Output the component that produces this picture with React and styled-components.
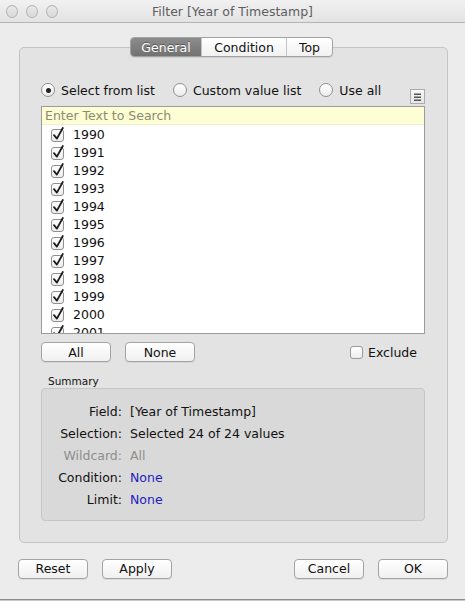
import React from 'react';
import styled, {createGlobalStyle} from 'styled-components';

const GlobalStyle = createGlobalStyle`
    html, body {
        margin: 0;
        padding: 0;
        background: #c9c9c9;
    }
    body {
        font-family: "DejaVu Sans", "Liberation Sans", sans-serif;
        font-size: 12.5px;
        color: #111;
    }
`;

const WindowDIV = styled.div`
    width: 465px;
    height: 599px;
    background: #ececec;
    border-bottom: 1px solid #8c8c8c;
    display: flex;
    flex-direction: column;
    overflow: hidden;
`;

const TitleBar = styled.div`
    height: 22px;
    flex: none;
    display: flex;
    align-items: center;
    padding-left: 6px;
    background: linear-gradient(#f1f1f1, #e3e3e3);
    border-bottom: 1px solid #b4b4b4;
`;

const Lights = styled.div`
    display: flex;
    gap: 8px;
    width: 52px;
`;

const Light = styled.span`
    width: 11px;
    height: 11px;
    border-radius: 50%;
    border: 1px solid #b3b3b3;
    background: linear-gradient(#e9e9e9, #d9d9d9);
`;

const Title = styled.div`
    flex: 1;
    text-align: center;
    color: #5e5e5e;
    margin-right: 58px;
    margin-top: 1px;
`;

const Content = styled.div`
    flex: 1;
    display: flex;
    flex-direction: column;
    padding: 14px 17px 0 19px;
`;

const TabStrip = styled.div`
    display: flex;
    justify-content: center;
    position: relative;
    z-index: 1;
    margin-bottom: -10px;
    padding-right: 4px;
`;

const TabGroup = styled.div`
    display: flex;
    border: 1px solid #a2a2a2;
    border-radius: 4px;
    overflow: hidden;
    background: linear-gradient(#ffffff, #f1f1f1);
    box-shadow: 0 1px 0 rgba(0,0,0,0.08);
`;

const Tab = styled.div`
    height: 18px;
    width: ${p => p.$w}px;
    display: flex;
    align-items: center;
    justify-content: center;
    border-left: ${p => p.$first ? 'none' : '1px solid #c4c4c4'};
    color: ${p => p.$active ? '#fff' : '#111'};
    background: ${p => p.$active ? 'linear-gradient(#8c8c8c, #727272)' : 'transparent'};
    text-shadow: ${p => p.$active ? '0 -1px 0 rgba(0,0,0,0.35)' : 'none'};
`;

const TabBox = styled.div`
    border: 1px solid #c3c3c3;
    border-radius: 5px;
    background: #e3e3e3;
    padding: 35px 22px 21px 21px;
    display: flex;
    flex-direction: column;
`;

const HeaderRow = styled.div`
    display: flex;
    justify-content: space-between;
    align-items: flex-start;
    height: 21px;
`;

const RadioGroup = styled.div`
    display: flex;
    gap: 18px;
`;

const RadioLabel = styled.label`
    display: flex;
    align-items: center;
    gap: 6px;
    height: 14px;
`;

const RadioCircle = styled.span`
    width: 12px;
    height: 12px;
    border-radius: 50%;
    border: 1px solid #8f8f8f;
    background: linear-gradient(#ffffff, #ececec);
    display: flex;
    align-items: center;
    justify-content: center;
    &::after {
        content: '';
        width: 5px;
        height: 5px;
        border-radius: 50%;
        background: #222;
        display: ${p => p.$on ? 'block' : 'none'};
    }
`;

const MenuButton = styled.div`
    margin-top: 6px;
    width: 13px;
    height: 13px;
    border: 1px solid #acacac;
    background: linear-gradient(#f7f7f7, #e6e6e6);
    display: flex;
    align-items: center;
    justify-content: center;
`;

const ListBox = styled.div`
    margin-top: 2px;
    height: 226px;
    border: 1px solid #9b9b9b;
    background: #fff;
    overflow: hidden;
`;

const SearchRow = styled.div`
    height: 17px;
    background: #fdfdd6;
    color: #8b8b6e;
    padding-left: 3px;
    display: flex;
    align-items: center;
    border-bottom: 1px solid #f0f0c8;
`;

const ItemRow = styled.div`
    height: 18px;
    display: flex;
    align-items: center;
    padding-left: 9px;
    gap: 7px;
`;

const ListActions = styled.div`
    margin-top: 8px;
    display: flex;
    align-items: center;
    gap: 14px;
    padding-right: 8px;
`;

const Button = styled.div`
    width: 68px;
    height: 18px;
    border: 1px solid #a3a3a3;
    border-radius: 4px;
    background: linear-gradient(#ffffff, #f0f0f0);
    box-shadow: 0 1px 0 rgba(0,0,0,0.07);
    display: flex;
    align-items: center;
    justify-content: center;
`;

const ExcludeLabel = styled.label`
    margin-left: auto;
    display: flex;
    align-items: center;
    gap: 5px;
`;

const SmallBox = styled.span`
    width: 11px;
    height: 11px;
    border: 1px solid #9a9a9a;
    border-radius: 3px;
    background: linear-gradient(#ffffff, #ededed);
`;

const SummaryTitle = styled.div`
    margin-top: 12px;
    padding-left: 7px;
    font-size: 10.5px;
    height: 14px;
    line-height: 14px;
`;

const SummaryBox = styled.div`
    border: 1px solid #c6c6c6;
    border-radius: 4px;
    background: #d9d9d9;
    padding: 12px 0 10px 0;
    display: grid;
    grid-template-columns: 80px 1fr;
    column-gap: 8px;
    grid-auto-rows: 21.8px;
    align-items: center;
`;

const SumLabel = styled.div`
    text-align: right;
    color: ${p => p.$dim ? '#8e8e8e' : '#111'};
`;

const SumValue = styled.div`
    color: ${p => p.$dim ? '#8e8e8e' : p.$link ? '#2219c0' : '#111'};
`;

const Footer = styled.div`
    display: flex;
    gap: 14px;
    padding: 16px 0 0 0;
    margin-left: -1px;
`;

const Spacer = styled.div`
    flex: 1;
`;

const CheckIcon = () => (
    <svg width="15" height="15" viewBox="0 0 15 15">
        <defs>
            <linearGradient id="cbg" x1="0" y1="0" x2="0" y2="1">
                <stop offset="0" stopColor="#ffffff"/>
                <stop offset="1" stopColor="#ececec"/>
            </linearGradient>
        </defs>
        <rect x="0.5" y="2.5" width="12" height="12" rx="2.5" fill="url(#cbg)" stroke="#8f8f8f"/>
        <path d="M3 8.2 L5.9 11.6 L11.8 1" fill="none" stroke="#1c1c1c" strokeWidth="1.8" strokeLinecap="round" strokeLinejoin="round"/>
    </svg>
);

const MenuIcon = () => (
    <svg width="9" height="8" viewBox="0 0 9 8">
        <rect x="1" y="0.5" width="7" height="1.5" fill="#555"/>
        <rect x="1" y="3.5" width="7" height="1.5" fill="#555"/>
        <rect x="1" y="6.5" width="7" height="1.5" fill="#555"/>
    </svg>
);

const years = ['1990','1991','1992','1993','1994','1995','1996','1997','1998','1999','2000','2001'];

const summary = [
    {label: 'Field:', value: '[Year of Timestamp]'},
    {label: 'Selection:', value: 'Selected 24 of 24 values'},
    {label: 'Wildcard:', value: 'All', dim: true},
    {label: 'Condition:', value: 'None', link: true},
    {label: 'Limit:', value: 'None', link: true},
];

const App = () => {
    return (
        <>
            <GlobalStyle/>
            <WindowDIV>
                <TitleBar>
                    <Lights>
                        <Light/><Light/><Light/>
                    </Lights>
                    <Title>Filter [Year of Timestamp]</Title>
                </TitleBar>
                <Content>
                    <TabStrip>
                        <TabGroup>
                            <Tab $first $active $w={70}>General</Tab>
                            <Tab $w={84}>Condition</Tab>
                            <Tab $w={45}>Top</Tab>
                        </TabGroup>
                    </TabStrip>
                    <TabBox>
                        <HeaderRow>
                            <RadioGroup>
                                <RadioLabel><RadioCircle $on/>Select from list</RadioLabel>
                                <RadioLabel><RadioCircle/>Custom value list</RadioLabel>
                                <RadioLabel><RadioCircle/>Use all</RadioLabel>
                            </RadioGroup>
                            <MenuButton><MenuIcon/></MenuButton>
                        </HeaderRow>
                        <ListBox>
                            <SearchRow>Enter Text to Search</SearchRow>
                            {years.map(y => (
                                <ItemRow key={y}><CheckIcon/>{y}</ItemRow>
                            ))}
                        </ListBox>
                        <ListActions>
                            <Button>All</Button>
                            <Button>None</Button>
                            <ExcludeLabel><SmallBox/>Exclude</ExcludeLabel>
                        </ListActions>
                        <SummaryTitle>Summary</SummaryTitle>
                        <SummaryBox>
                            {summary.map(s => (
                                <React.Fragment key={s.label}>
                                    <SumLabel $dim={s.dim}>{s.label}</SumLabel>
                                    <SumValue $dim={s.dim} $link={s.link}>{s.value}</SumValue>
                                </React.Fragment>
                            ))}
                        </SummaryBox>
                    </TabBox>
                    <Footer>
                        <Button>Reset</Button>
                        <Button>Apply</Button>
                        <Spacer/>
                        <Button>Cancel</Button>
                        <Button>OK</Button>
                    </Footer>
                </Content>
            </WindowDIV>
        </>
    );
}

export default App;
